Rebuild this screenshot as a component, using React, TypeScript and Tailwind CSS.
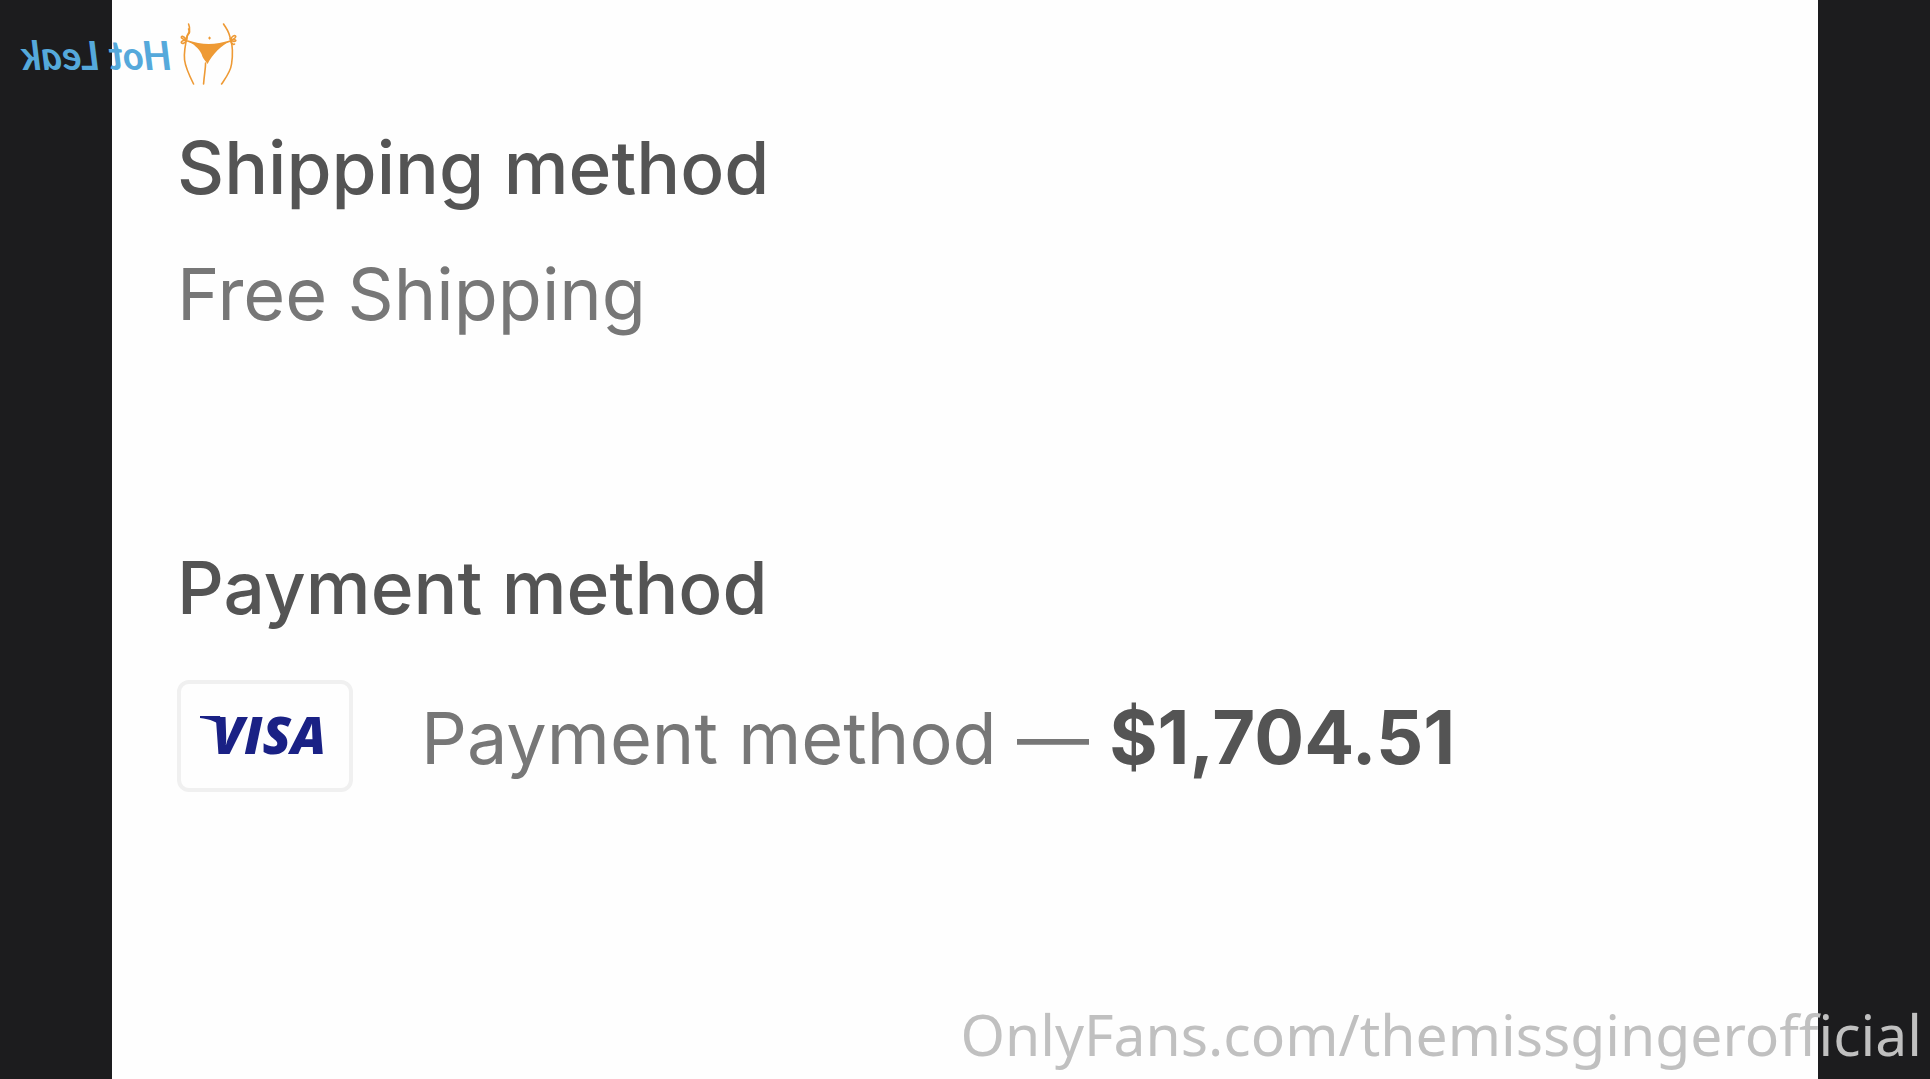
function SiteLogo() {
  return (
    <div className="absolute left-[21px] top-[20px] flex -scale-x-100 items-center gap-2">
      <svg viewBox="0 0 60 66" className="h-[66px] w-[60px]" fill="none" stroke="#ee9a35" strokeWidth="1.6" strokeLinecap="round" aria-hidden="true">
        <g transform="translate(60 0) scale(-1 1)">
          <path d="M9 4c2 5 1 8-1 11-2 8-4 16-3 25 1 8 5 16 9 24" />
          <path d="M44 4c3 5 6 8 7 16 3 8 2 17 1 24-1 8-6 14-10 20" />
          <path d="M26 43c0 6-1 9-2 21" />
          <path d="M8 21C22 26 36 26 51 21C42 25 33 34 28 44C25 40 23 38 22 34C19 28 14 24 8 21Z" fill="#ee9a35" stroke="none" />
          <path d="M8 21C22 26 36 26 51 21" />
          <path d="M7 20c-3-5-6-4-5-2 1 1 3 2 5 2-4 0-6 2-5 3s4 0 5-3c0-5 1-5 2-6s2-2 0-5M51 20c1-4 4-5 5-4s-2 4-5 4c4-1 6 0 5 1s-4 0-5-1c1 4 3 5 4 4" />
          <path d="M30 17v2m-1-1h2" strokeWidth="1.2" />
        </g>
      </svg>
      <span className="whitespace-nowrap pt-1 font-['Lato',sans-serif] text-[40px] font-bold italic leading-[60px] text-[#55a9db]">Hot Leak</span>
    </div>
  );
}

function VisaCard() {
  return (
    <div role="img" aria-label="Visa" className="flex h-28 w-44 shrink-0 items-center justify-center rounded-xl border-4 border-[#f0f0f0] bg-[#fefefe]">
      <span className="relative pb-1 pl-2 font-['Open_Sans',sans-serif] text-[52px] font-extrabold italic leading-[60px] text-[#1a2185]">
        VISA
        <svg viewBox="0 0 24 12" className="absolute left-[-4px] top-[12px] h-3 w-6" fill="#1a2185" aria-hidden="true">
          <path d="M0 0H20L23 12C18 6 10 3 0 2Z" />
        </svg>
      </span>
    </div>
  );
}

export default function App() {
  return (
    <div className="relative min-h-screen bg-[#1c1c1e] px-28 font-['Inter',sans-serif]">
      <main className="min-h-screen bg-[#fefefe] px-[65px] pt-[124px] text-[72px] leading-[88px] text-[#777777]">
        <section>
          <h2 className="text-[73px] font-medium text-[#545454]">Shipping method</h2>
          <p className="mt-[38px]">Free Shipping</p>
        </section>
        <section className="mt-[206px]">
          <h2 className="text-[73px] font-medium text-[#545454]">Payment method</h2>
          <div className="mt-12 flex items-center gap-[68px]">
            <VisaCard />
            <p className="whitespace-nowrap pt-0.5">
              Payment method — <strong className="text-[74px] font-bold text-[#545454]">$1,704.51</strong>
            </p>
          </div>
        </section>
      </main>
      <SiteLogo />
      <p className="absolute bottom-0 right-2 whitespace-nowrap font-['Noto_Sans',sans-serif] text-[57px] leading-[90px] text-[#c0c0c0]">
        OnlyFans.com/themissgingerofficial
      </p>
    </div>
  );
}
